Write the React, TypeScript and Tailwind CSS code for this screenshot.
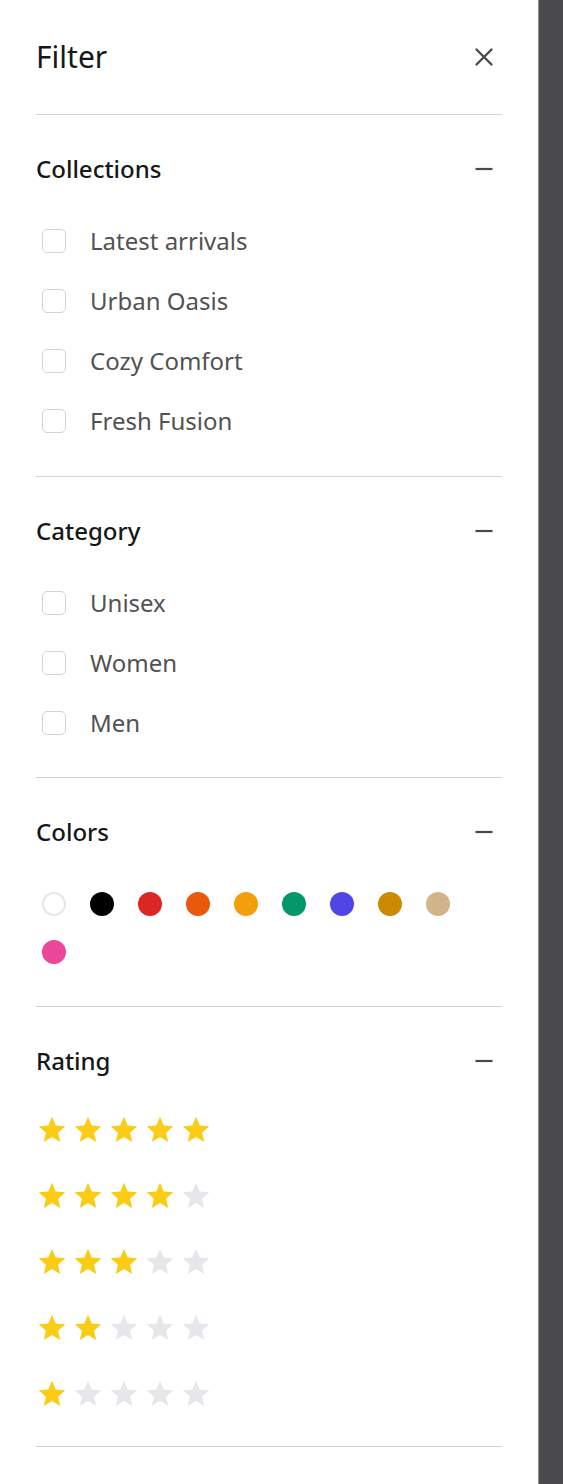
import React from 'react';

const collections = ['Latest arrivals', 'Urban Oasis', 'Cozy Comfort', 'Fresh Fusion'];
const categories = ['Unisex', 'Women', 'Men'];
const colors = [
  'bg-white border-2 border-gray-200',
  'bg-black',
  'bg-[#dc2626]',
  'bg-[#ea580c]',
  'bg-[#f59e0b]',
  'bg-[#059669]',
  'bg-[#4f46e5]',
  'bg-[#ca8a04]',
  'bg-[#d2b48c]',
  'bg-[#ec4899]',
];

const Star = ({ filled }: { filled: boolean }) => (
  <svg viewBox="0 0 24 24" className={`h-8 w-8 ${filled ? 'text-[#facc15]' : 'text-[#e5e7eb]'}`} fill="currentColor">
    <path d="M12 17.27L18.18 21l-1.64-7.03L22 9.24l-7.19-.61L12 2 9.19 8.63 2 9.24l5.46 4.73L5.82 21z" />
  </svg>
);

const Minus = () => (
  <svg viewBox="0 0 36 36" className="h-9 w-9 text-[#4b4b4b]" fill="none" stroke="currentColor" strokeWidth="2.2">
    <line x1="9.5" y1="18" x2="26.5" y2="18" />
  </svg>
);

const Section = ({ title, last, children }: { title: string; last?: boolean; children: React.ReactNode }) => (
  <section className={`border-b border-neutral-300 pt-[38px] ${last ? 'pb-[37px]' : 'pb-9'}`}>
    <div className="flex h-8 items-center justify-between">
      <h3 className="text-[24px] font-medium leading-8 text-[#171717]">{title}</h3>
      <button className="flex h-9 w-9 items-center justify-center">
        <Minus />
      </button>
    </div>
    {children}
  </section>
);

const CheckList = ({ items }: { items: string[] }) => (
  <ul className="mt-[38px] flex flex-col gap-6">
    {items.map((item) => (
      <li key={item} className="flex h-9 items-center">
        <span className="ml-[6px] h-6 w-6 rounded-[5px] border border-neutral-300 bg-white" />
        <span className="ml-6 text-[24px] leading-9 text-[#525252]">{item}</span>
      </li>
    ))}
  </ul>
);

export default function App() {
  return (
    <div className="flex min-h-screen bg-[#4a4a4c]" style={{ fontFamily: '"Noto Sans", "Open Sans", sans-serif' }}>
      <aside className="w-[538px] shrink-0 bg-white px-9 pb-9">
        {/* Header */}
        <div className="flex h-[115px] items-center justify-between border-b border-neutral-300">
          <h2 className="text-[30px] leading-10 text-[#171717]">Filter</h2>
          <button className="flex h-9 w-9 items-center justify-center text-[#4b4b4b]">
            <svg viewBox="0 0 36 36" className="h-9 w-9" fill="none" stroke="currentColor" strokeWidth="2.4" strokeLinecap="round">
              <line x1="10.5" y1="10.5" x2="25.5" y2="25.5" />
              <line x1="25.5" y1="10.5" x2="10.5" y2="25.5" />
            </svg>
          </button>
        </div>

        <Section title="Collections" last>
          <CheckList items={collections} />
        </Section>

        <Section title="Category">
          <CheckList items={categories} />
        </Section>

        <Section title="Colors">
          <div className="mt-[38px] flex flex-wrap gap-3">
            {colors.map((c, i) => (
              <button key={i} className="flex h-9 w-9 items-center justify-center">
                <span className={`h-6 w-6 rounded-full ${c}`} />
              </button>
            ))}
          </div>
        </Section>

        <Section title="Rating">
          <div className="mt-[37px] flex flex-col gap-[34px]">
            {[5, 4, 3, 2, 1].map((n) => (
              <div key={n} className="flex gap-1">
                {[1, 2, 3, 4, 5].map((s) => (
                  <Star key={s} filled={s <= n} />
                ))}
              </div>
            ))}
          </div>
        </Section>
      </aside>
      <div className="flex-1 border-l border-[#8f8f8f] bg-[#4a4a4c]" />
    </div>
  );
}
